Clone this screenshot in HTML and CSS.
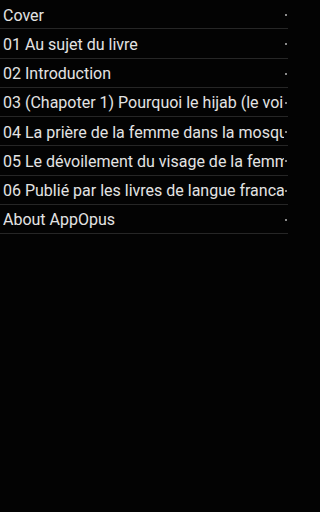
FILE: index.html
```html
<!DOCTYPE html>
<html>
<head>
<meta charset="utf-8">
<link rel="stylesheet" href="styles.css">
</head>
<body>
<ul class="list">
  <li class="row"><span class="label">Cover</span><span class="mark"></span></li>
  <li class="row"><span class="label">01 Au sujet du livre</span><span class="mark"></span></li>
  <li class="row"><span class="label">02 Introduction</span><span class="mark"></span></li>
  <li class="row"><span class="label">03 (Chapoter 1) Pourquoi le hijab (le voile)</span><span class="mark"></span></li>
  <li class="row"><span class="label">04 La prière de la femme dans la mosquée</span><span class="mark"></span></li>
  <li class="row"><span class="label">05 Le dévoilement du visage de la femme</span><span class="mark"></span></li>
  <li class="row"><span class="label">06 Publié par les livres de langue francaise</span><span class="mark"></span></li>
  <li class="row"><span class="label">About AppOpus</span><span class="mark"></span></li>
</ul>
</body>
</html>
```
FILE: styles.css
```css
html, body {
  margin: 0;
  padding: 0;
  background: #030303;
}
body {
  min-height: 512px;
  overflow: hidden;
}
.list {
  list-style: none;
  margin: 0;
  padding: 0;
  width: 288px;
  overflow: hidden;
  font-family: Roboto, "Noto Sans", sans-serif;
}
.row {
  display: flex;
  align-items: center;
  height: 29.25px;
  box-sizing: border-box;
  border-bottom: 1px solid #262626;
  padding-left: 3px;
}
.label {
  flex: 1;
  min-width: 0;
  overflow: hidden;
  white-space: nowrap;
  color: #e3e3e3;
  font-size: 16px;
  line-height: 20px;
  padding-top: 3px;
}
.mark {
  width: 2px;
  height: 2px;
  background: #8a8a8a;
  margin-left: 1px;
  margin-right: 1px;
  align-self: flex-start;
  margin-top: 14px;
  flex: none;
}
```
